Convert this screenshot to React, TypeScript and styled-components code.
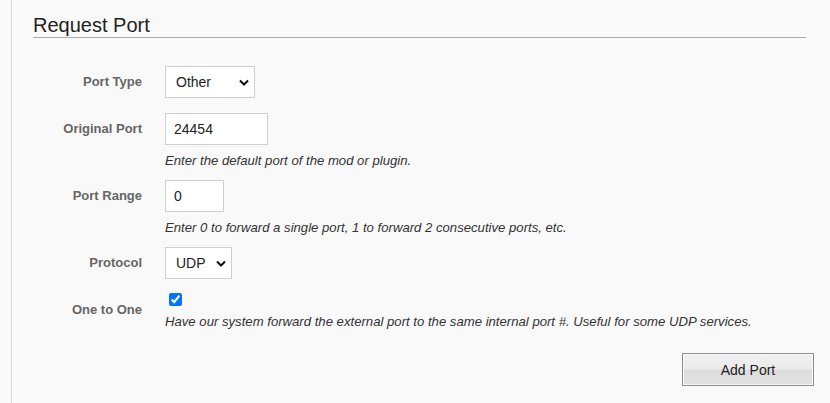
import React from "react";
import styled, { createGlobalStyle } from "styled-components";

const Global = createGlobalStyle`
  html, body { margin: 0; padding: 0; background: #f9f9f9; }
  body { font-family: "Liberation Sans", Arial, sans-serif; color: #333; }
`;

const Page = styled.div`
  width: 830px;
  height: 403px;
  box-sizing: border-box;
  padding-left: 11px;
  overflow: hidden;
`;

const Panel = styled.section`
  height: 100%;
  border-left: 1px solid #dcdcdc;
  box-sizing: border-box;
  padding: 14px 16px 0 21px;
`;

const Heading = styled.h2`
  margin: 0 8px 0 0;
  font-size: 20px;
  font-weight: normal;
  color: #222;
  line-height: 23px;
  border-bottom: 1px solid #aaa;
`;

const Form = styled.form`
  margin-top: 28px;
  display: grid;
  grid-template-columns: 109px 1fr;
  column-gap: 23px;
  row-gap: 11px;
`;

const Label = styled.label<{ $center?: boolean }>`
  text-align: right;
  font-size: 13px;
  font-weight: bold;
  color: #666;
  line-height: 32px;
  align-self: ${(p) => (p.$center ? "center" : "start")};
`;

const Field = styled.div<{ $extra?: number }>`
  display: flex;
  flex-direction: column;
  align-items: flex-start;
  margin-bottom: ${(p) => p.$extra ?? 0}px;
`;

const SelectWrap = styled.div<{ $w: number }>`
  position: relative;
  width: ${(p) => p.$w}px;
  height: 32px;
`;

const Select = styled.select`
  appearance: none;
  -webkit-appearance: none;
  width: 100%;
  height: 100%;
  box-sizing: border-box;
  border: 1px solid #cfcfcf;
  border-radius: 0;
  background: #fff;
  font-family: "Liberation Sans", Arial, sans-serif;
  font-size: 14px;
  color: #222;
  padding: 0 0 0 10px;
  outline: none;
`;

const Chevron = styled.svg`
  position: absolute;
  right: 6px;
  top: 13px;
  width: 10px;
  height: 7px;
  pointer-events: none;
`;

const Input = styled.input<{ $w: number }>`
  width: ${(p) => p.$w}px;
  height: 32px;
  box-sizing: border-box;
  border: 1px solid #cfcfcf;
  border-radius: 0;
  background: #fff;
  font-family: "Liberation Sans", Arial, sans-serif;
  font-size: 14px;
  color: #222;
  padding: 0 8px;
  outline: none;
`;

const Help = styled.p<{ $top?: number }>`
  margin: ${(p) => p.$top ?? 8}px 0 0;
  font-size: 13.15px;
  font-style: italic;
  line-height: 16px;
  color: #333;
`;

const Check = styled.input`
  display: block;
  width: 13px;
  height: 13px;
  margin: 3px 0 0 4px;
  accent-color: #0075ff;
`;

const Actions = styled.div`
  display: flex;
  justify-content: flex-end;
  margin-top: 23px;
`;

const Button = styled.button`
  width: 132px;
  height: 33px;
  border: 1px solid #8f8f8f;
  border-radius: 0;
  box-shadow: inset 0 0 0 1px #f7f7f7;
  background: linear-gradient(#f0f0f0 0%, #ebebeb 48%, #dddddd 52%, #e1e1e1 100%);
  font-family: "Liberation Sans", Arial, sans-serif;
  font-size: 14px;
  color: #222;
  cursor: pointer;
`;

const Arrow = () => (
  <Chevron viewBox="0 0 10 7">
    <path d="M1 1.5 L5 5.5 L9 1.5" fill="none" stroke="#111" strokeWidth="2" />
  </Chevron>
);

export default function App() {
  return (
    <Page>
      <Global />
      <Panel>
        <Heading>Request Port</Heading>
        <Form onSubmit={(e) => e.preventDefault()}>
          <Label>Port Type</Label>
          <Field $extra={4}>
            <SelectWrap $w={90}>
              <Select defaultValue="Other">
                <option>Other</option>
                <option>Game</option>
              </Select>
              <Arrow />
            </SelectWrap>
          </Field>

          <Label>Original Port</Label>
          <Field>
            <Input $w={103} defaultValue="24454" />
            <Help>Enter the default port of the mod or plugin.</Help>
          </Field>

          <Label>Port Range</Label>
          <Field>
            <Input $w={59} defaultValue="0" />
            <Help>Enter 0 to forward a single port, 1 to forward 2 consecutive ports, etc.</Help>
          </Field>

          <Label>Protocol</Label>
          <Field>
            <SelectWrap $w={67}>
              <Select defaultValue="UDP">
                <option>UDP</option>
                <option>TCP</option>
              </Select>
              <Arrow />
            </SelectWrap>
          </Field>

          <Label $center>One to One</Label>
          <Field>
            <Check type="checkbox" defaultChecked />
            <Help>
              Have our system forward the external port to the same internal port #. Useful for some UDP services.
            </Help>
          </Field>
        </Form>
        <Actions>
          <Button type="button">Add Port</Button>
        </Actions>
      </Panel>
    </Page>
  );
}
